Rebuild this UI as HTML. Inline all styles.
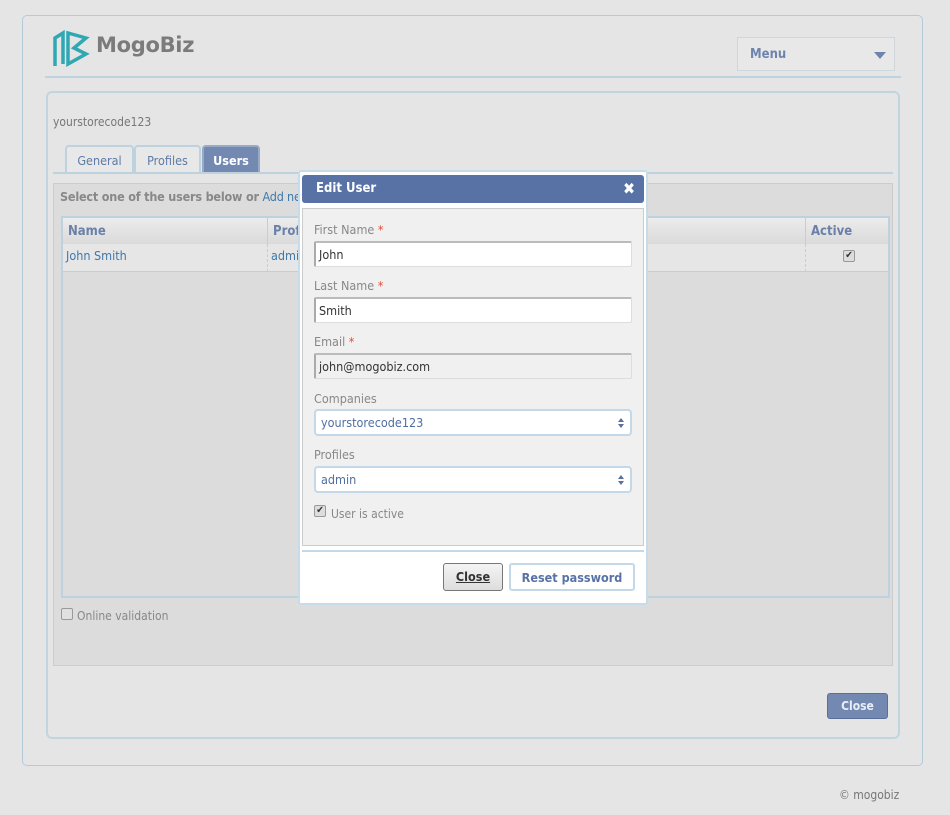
<!DOCTYPE html>
<html><head><style>
*{box-sizing:border-box;margin:0;padding:0}
body{width:950px;height:815px;background:#e5e5e5;font-family:"DejaVu Sans Condensed","DejaVu Sans",sans-serif;font-size:12px;color:#777;position:relative;overflow:hidden}
.abs{position:absolute}
.outer{left:22px;top:15px;width:901px;height:751px;border:1px solid #b3cbd8;border-radius:5px}
.hline{left:45px;top:76px;width:856px;height:2px;background:#bdd3df}
.inner{left:46px;top:91px;width:854px;height:648px;border:2px solid #c0d5e0;border-radius:6px}
.menu{left:737px;top:37px;width:158px;height:34px;border:1px solid #cfd6dc;background:#e8e8e8;color:#6f84ad;font-weight:bold;font-size:13px;padding:9px 12px}
.tab{top:145px;height:28px;border:2px solid #bcd2df;border-bottom:none;border-radius:4px 4px 0 0;color:#5e7ba5;font-size:12.5px;padding:6px 0;text-align:center;background:#e8e8e8}
.grey{left:53px;top:183px;width:840px;height:483px;background:#dcdcdc;border:1px solid #ccc}
.tbl{left:61px;top:216px;width:829px;height:382px;border:2px solid #bcd2df;background:#dcdcdc}
.th{top:218px;height:26px;background:linear-gradient(#ececec,#dadada);color:#6b80a8;font-weight:bold;font-size:13px;padding:6px 5px}
.td{top:244px;height:28px;background:#e6e6e6;color:#3f78a8;font-size:12.5px;padding:4px 3px;border-bottom:1px solid #ccc}
.dlg{left:298px;top:170px;width:350px;height:435px;background:#fff;border:2px solid #c7dcea;border-radius:3px}
.title{left:302px;top:175px;width:342px;height:28px;background:#5872a6;border-radius:3px;color:#fff;font-weight:bold;font-size:13px;padding:6px 14px}
.body{left:302px;top:208px;width:342px;height:338px;background:#f0f0f0;border:1px solid #ccc}
.lbl{left:314px;color:#888;font-size:12.5px}
.star{color:#e74c3c}
.inp{left:314px;width:318px;height:26px;background:#fff;border:1px solid #ddd;border-left:2px solid #aaa;border-top:2px solid #bbb;color:#333;font-size:12.5px;padding:4px 3px;border-radius:2px}
.sel{left:314px;width:318px;height:27px;background:#fff;border:2px solid #c3d8e8;border-radius:4px;color:#4f6ea3;font-size:12.5px;padding:4px 5px}
.sel:after{content:"";position:absolute;right:6px;top:7px;border:3px solid transparent;border-bottom:4px solid #5a6f9a;border-top:none}
.sel:before{content:"";position:absolute;right:6px;top:13px;border:3px solid transparent;border-top:4px solid #5a6f9a;border-bottom:none}
.cb{width:12px;height:12px;border:1px solid #999;border-radius:2px;background:#ddd;font-size:10px;line-height:10px;text-align:center;color:#333}
</style></head><body>
<div class="abs outer"></div>
<div class="abs hline"></div>
<svg class="abs" style="left:52px;top:30px" width="38" height="38" viewBox="0 0 38 38" fill="none" stroke="#30a8b3" stroke-width="3.5"><path d="M3 36V8L11 3V34"/><path d="M16 3V34L34 24L22 18L34 8Z"/></svg>
<div class="abs" style="left:96px;top:33px;font-family:'DejaVu Sans',sans-serif;font-weight:bold;font-size:21px;color:#7b7b7b;letter-spacing:-.3px">MogoBiz</div>
<div class="abs menu">Menu<span style="position:absolute;right:8px;top:14px;border:6px solid transparent;border-top:7px solid #6f84ad;border-bottom:none"></span></div>
<div class="abs inner"></div>
<div class="abs" style="left:53px;top:115px;color:#777">yourstorecode123</div>
<div class="abs tab" style="left:65px;width:69px">General</div>
<div class="abs tab" style="left:134px;width:67px">Profiles</div>
<div class="abs tab" style="left:202px;width:58px;background:#7389b2;border-color:#97aac8;color:#fff;font-weight:bold">Users</div>
<div class="abs" style="left:53px;top:172px;width:840px;height:2px;background:#bcd2df"></div>
<div class="abs grey"></div>
<div class="abs" style="left:60px;top:189px;font-weight:bold;font-size:12.5px;color:#888;letter-spacing:-.2px">Select one of the users below or <span style="color:#3f78a8;font-weight:normal">Add ne</span></div>
<div class="abs tbl"></div>
<div class="abs th" style="left:63px;width:205px;border-right:1px solid #ccc">Name</div>
<div class="abs th" style="left:268px;width:538px;border-right:1px solid #ccc">Prof</div>
<div class="abs th" style="left:806px;width:82px">Active</div>
<div class="abs td" style="left:63px;width:205px;border-right:1px dashed #ccc">John Smith</div>
<div class="abs td" style="left:268px;width:538px;border-right:1px dashed #ccc">admi</div>
<div class="abs td" style="left:806px;width:82px"><div class="cb" style="margin:2px 0 0 34px">✔</div></div>
<div class="abs cb" style="left:61px;top:608px;background:#e0e0e0"></div>
<div class="abs" style="left:77px;top:609px;color:#888">Online validation</div>
<div class="abs" style="left:827px;top:693px;width:61px;height:26px;background:#7389b2;border:1px solid #5c6f98;border-radius:3px;color:#e8eef8;font-weight:bold;text-align:center;padding:5px 0">Close</div>
<div class="abs" style="left:839px;top:788px;color:#777">© mogobiz</div>

<div class="abs dlg"></div>
<div class="abs title">Edit User<span style="position:absolute;right:9px;top:4px;font-size:16px">✖</span></div>
<div class="abs body"></div>
<div class="abs lbl" style="top:222px">First Name <span class="star">*</span></div>
<div class="abs inp" style="top:241px">John</div>
<div class="abs lbl" style="top:278px">Last Name <span class="star">*</span></div>
<div class="abs inp" style="top:297px">Smith</div>
<div class="abs lbl" style="top:334px">Email <span class="star">*</span></div>
<div class="abs inp" style="top:353px;background:#f0f0f0">john@mogobiz.com</div>
<div class="abs lbl" style="top:391px">Companies</div>
<div class="abs sel" style="top:409px">yourstorecode123</div>
<div class="abs lbl" style="top:447px">Profiles</div>
<div class="abs sel" style="top:466px">admin</div>
<div class="abs cb" style="left:314px;top:505px">✔</div>
<div class="abs" style="left:331px;top:507px;color:#888">User is active</div>
<div class="abs" style="left:302px;top:550px;width:342px;height:2px;background:#c3d8e8"></div>
<div class="abs" style="left:443px;top:563px;width:60px;height:28px;background:linear-gradient(#f4f4f4,#ddd);border:1px solid #777;border-radius:3px;color:#333;font-weight:bold;font-size:12.5px;text-decoration:underline;text-align:center;padding:5px 0">Close</div>
<div class="abs" style="left:509px;top:563px;width:126px;height:28px;background:#fff;border:2px solid #c3d8e8;border-radius:3px;color:#5872a6;font-weight:bold;font-size:12.5px;text-align:center;padding:5px 0">Reset password</div>
</body></html>
